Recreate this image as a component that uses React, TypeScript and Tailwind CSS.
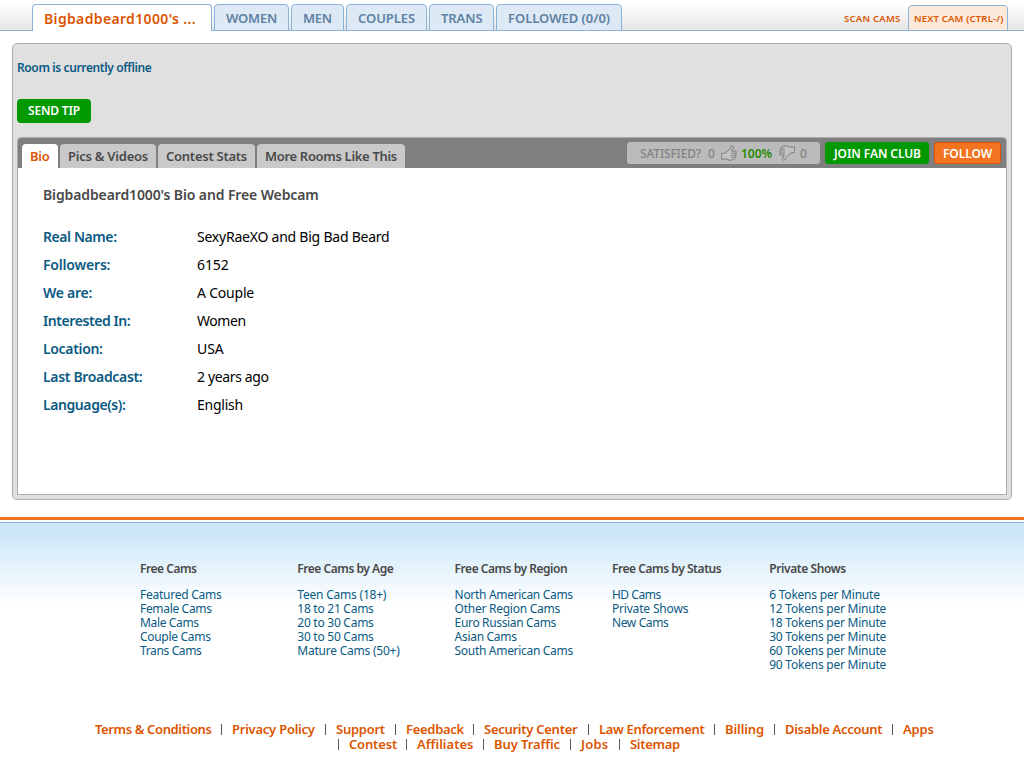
const navTabs = [
  { label: "WOMEN", cls: "w-[75px] tracking-[-0.2px]" },
  { label: "MEN", cls: "w-[53px] tracking-[-0.35px]" },
  { label: "COUPLES", cls: "w-[81px] tracking-[-0.07px]" },
  { label: "TRANS", cls: "w-[65px] tracking-[-0.09px]" },
  { label: "FOLLOWED (0/0)", cls: "w-[126px] tracking-[-0.02px]" },
];

const roomTabs = [
  { label: "Bio", cls: "w-[36px] bg-white text-[#dc5500] tracking-[-0.26px]" },
  { label: "Pics & Videos", cls: "w-[96px] bg-[#c9c9c9] text-[#494949] tracking-[-0.24px]" },
  { label: "Contest Stats", cls: "w-[97px] bg-[#c9c9c9] text-[#494949] tracking-[-0.25px]" },
  { label: "More Rooms Like This", cls: "w-[148px] bg-[#c9c9c9] text-[#494949] tracking-[-0.32px]" },
];

const bio = [
  { k: "Real Name:", kc: "tracking-[-0.42px]", v: "SexyRaeXO and Big Bad Beard", vc: "tracking-[-0.23px]" },
  { k: "Followers:", kc: "tracking-[-0.18px]", v: "6152", vc: "tracking-[-0.1px]" },
  { k: "We are:", kc: "tracking-[-0.28px]", v: "A Couple", vc: "tracking-[-0.21px]" },
  { k: "Interested In:", kc: "tracking-[-0.42px]", v: "Women", vc: "tracking-[-0.42px]" },
  { k: "Location:", kc: "tracking-[-0.33px]", v: "USA", vc: "tracking-[-0.1px]" },
  { k: "Last Broadcast:", kc: "tracking-[-0.33px]", v: "2 years ago", vc: "tracking-[-0.36px]" },
  { k: "Language(s):", kc: "tracking-[-0.42px]", v: "English", vc: "tracking-[-0.23px]" },
];

const columns = [
  {
    title: "Free Cams",
    tc: "tracking-[-0.47px]",
    links: [
      ["Featured Cams", "tracking-[-0.25px]"],
      ["Female Cams", "tracking-[-0.33px]"],
      ["Male Cams", "tracking-[-0.36px]"],
      ["Couple Cams", "tracking-[-0.3px]"],
      ["Trans Cams", "tracking-[-0.36px]"],
    ],
  },
  {
    title: "Free Cams by Age",
    tc: "tracking-[-0.46px]",
    links: [
      ["Teen Cams (18+)", "tracking-[-0.21px]"],
      ["18 to 21 Cams", "tracking-[-0.26px]"],
      ["20 to 30 Cams", "tracking-[-0.26px]"],
      ["30 to 50 Cams", "tracking-[-0.26px]"],
      ["Mature Cams (50+)", "tracking-[-0.23px]"],
    ],
  },
  {
    title: "Free Cams by Region",
    tc: "tracking-[-0.47px]",
    links: [
      ["North American Cams", "tracking-[-0.32px]"],
      ["Other Region Cams", "tracking-[-0.26px]"],
      ["Euro Russian Cams", "tracking-[-0.34px]"],
      ["Asian Cams", "tracking-[-0.3px]"],
      ["South American Cams", "tracking-[-0.31px]"],
    ],
  },
  {
    title: "Free Cams by Status",
    tc: "tracking-[-0.44px]",
    links: [
      ["HD Cams", "tracking-[-0.46px]"],
      ["Private Shows", "tracking-[-0.17px]"],
      ["New Cams", "tracking-[-0.36px]"],
    ],
  },
  {
    title: "Private Shows",
    tc: "tracking-[-0.4px]",
    links: [
      ["6 Tokens per Minute", "tracking-[-0.22px]"],
      ["12 Tokens per Minute", "tracking-[-0.23px]"],
      ["18 Tokens per Minute", "tracking-[-0.23px]"],
      ["30 Tokens per Minute", "tracking-[-0.23px]"],
      ["60 Tokens per Minute", "tracking-[-0.23px]"],
      ["90 Tokens per Minute", "tracking-[-0.23px]"],
    ],
  },
];

const legalTop = [
  ["Privacy Policy", "w-[104px] tracking-[-0.24px]"],
  ["Support", "w-[70px] tracking-[-0.26px]"],
  ["Feedback", "w-[78px] tracking-[-0.3px]"],
  ["Security Center", "w-[115px] tracking-[-0.27px]"],
  ["Law Enforcement", "w-[126px] tracking-[-0.34px]"],
  ["Billing", "w-[60px] tracking-[-0.1px]"],
  ["Disable Account", "w-[118px] tracking-[-0.3px]"],
  ["Apps", "w-[50px] tracking-[-0.2px]"],
];

const legalBottom = [
  ["Contest", "w-[68px] tracking-[-0.17px]"],
  ["Affiliates", "w-[77px] tracking-[0.02px]"],
  ["Buy Traffic", "w-[87px] tracking-[-0.09px]"],
  ["Jobs", "w-[49px] tracking-[0.2px]"],
  ["Sitemap", "w-[70px] tracking-[-0.3px]"],
];

function Thumb({ down = false }: { down?: boolean }) {
  return (
    <svg
      width="16"
      height="16"
      viewBox="0 0 16 16"
      className={down ? "shrink-0 rotate-180" : "shrink-0"}
      fill="none"
      stroke="#7b7b7b"
      strokeWidth="1"
      strokeLinejoin="round"
      strokeLinecap="round"
    >
      <path
        fill="#c2c2c2"
        d="M.6 8.7 4.4 7.9 9.3 3.4 10.3 1C11 .2 12.6.8 12.5 2.3L10.7 6.1H14.6C15.8 6.2 15.8 8 14.7 8.1 15.6 8.5 15.4 10 14.4 10.2 15.1 10.7 14.8 12 13.8 12.2 14.3 13 13.8 14.1 12.7 14.3L9 15.4 5.2 13.9.8 14.1Z"
      />
      <path strokeWidth=".8" d="M10.4 8.1h4.2M10.4 10.2h3.9M10.4 12.2h3.3" />
    </svg>
  );
}

function LegalItem({ label, cls }: { label: string; cls: string }) {
  return (
    <div className={`flex shrink-0 items-center ${cls}`}>
      <span className="mr-[10px] h-[11px] w-px bg-[#5a5a5a]" />
      <a>{label}</a>
    </div>
  );
}

export default function App() {
  return (
    <div className="h-[768px] w-[1024px] overflow-hidden bg-white font-['Noto_Sans',sans-serif] whitespace-nowrap">
      <header className="flex h-[31px] items-end bg-linear-to-b from-white from-15% to-[#e4e4e4] pr-4 pl-8 shadow-[inset_0_-1px_0_#8bb3da]">
        <nav className="flex h-[27px] items-start gap-[2px]">
          <a className="h-[27px] w-[180px] rounded-t-[4px] border border-b-0 border-[#8bb3da] bg-white pl-[11px] text-[14px] leading-[28px] font-semibold tracking-[0.35px] text-[#dc5500]">
            Bigbadbeard1000's ...
          </a>
          {navTabs.map((t) => (
            <a
              key={t.label}
              className={`h-[27px] rounded-t-[4px] border border-[#8bb3da] bg-[#dde9f5] pl-[11px] text-[13px] leading-[27px] font-semibold text-[#5e81a4] ${t.cls}`}
            >
              {t.label}
            </a>
          ))}
        </nav>
        <div className="ml-auto flex text-[9.5px] font-semibold text-[#dc5500]">
          <a className="w-[64px] pt-px leading-[25px] tracking-[0.26px]">SCAN CAMS</a>
          <a className="h-[26px] w-[100px] rounded-t-[4px] border border-[#8bb3da] bg-[#fde9d9] pl-[5px] leading-[26px] tracking-[0.19px]">
            NEXT CAM (CTRL-/)
          </a>
        </div>
      </header>

      <main className="mx-3 mt-3 flex h-[457px] flex-col rounded-[5px] border border-[#acacac] bg-[#e0e0e0] px-1 pb-1">
        <p className="mt-4 h-4 text-[12px] leading-4 font-semibold tracking-[-0.38px] text-[#0a5a83]">
          Room is currently offline
        </p>
        <button className="mt-[23px] h-6 w-[74px] rounded-[4px] bg-[#009900] pl-[11px] text-left text-[12px] leading-6 font-semibold tracking-[-0.17px] text-white">
          SEND TIP
        </button>
        <section className="mt-[14px] flex flex-1 flex-col overflow-hidden rounded-t-[4px] border border-[#acacac] bg-white">
          <div className="flex h-[30px] shrink-0 items-end bg-[#7f7f7f] pl-1">
            <div className="flex items-end gap-[2px]">
              {roomTabs.map((t) => (
                <a
                  key={t.label}
                  className={`h-6 rounded-t-[4px] pl-2 text-[13px] leading-[25px] font-semibold ${t.cls}`}
                >
                  {t.label}
                </a>
              ))}
            </div>
            <div className="mr-[5px] mb-1 ml-auto flex h-[22px] items-stretch gap-[5px] text-[12px] leading-[23px] font-semibold">
              <div className="flex w-[193px] items-center rounded-[3px] bg-[#bbbbbb] pl-[13px] text-[#838383]">
                <span className="w-[67px] pt-px font-medium tracking-[-0.16px]">SATISFIED?</span>
                <span className="w-[14px] pt-px pl-px font-medium">0</span>
                <Thumb />
                <span className="ml-1 w-[38px] pt-px text-[#268b00] tracking-[-0.02px]">100%</span>
                <Thumb down />
                <span className="ml-[4px] pt-px pl-px font-medium">0</span>
              </div>
              <button className="w-[104px] rounded-[3px] bg-[#009900] pt-px pl-[9px] text-left leading-[22px] tracking-[-0.09px] text-white">
                JOIN FAN CLUB
              </button>
              <button className="w-[67px] rounded-[3px] border border-[#dc5500] bg-[#f47321] pt-px pl-2 text-left leading-5 tracking-[-0.09px] text-white">
                FOLLOW
              </button>
            </div>
          </div>
          <div className="px-[25px] pt-[17px] text-[14px]">
            <h1 className="h-[37px] leading-5 font-semibold tracking-[-0.12px] text-[#494949]">
              Bigbadbeard1000's Bio and Free Webcam
            </h1>
            <dl>
              {bio.map((r) => (
                <div key={r.k} className="flex h-7 items-center">
                  <dt className={`w-[154px] font-semibold text-[#0a5a83] ${r.kc}`}>{r.k}</dt>
                  <dd className={`text-black ${r.vc}`}>{r.v}</dd>
                </div>
              ))}
            </dl>
          </div>
        </section>
      </main>

      <footer className="mt-[17px] border-t-[3px] border-[#f47321] pt-[2px]">
        <div className="h-[246px] border-t border-[#8bb3da] bg-[linear-gradient(to_bottom,#cce7f8_0px,#d0e9f9_14px,#ffffff_82px)] pt-[39px]">
          <div className="flex h-[160px] pl-[140px] text-[12px]">
            {columns.map((c) => (
              <div key={c.title} className="w-[157.3px] shrink-0">
                <h2 className={`mb-3 leading-[14px] font-semibold text-[#494949] ${c.tc}`}>{c.title}</h2>
                <ul>
                  {c.links.map(([label, tc]) => (
                    <li key={label} className={`h-[14px] leading-[14px] text-[#0a5a83] ${tc}`}>
                      {label}
                    </li>
                  ))}
                </ul>
              </div>
            ))}
          </div>
          <div className="text-[13px] leading-[15px] font-semibold text-[#dc5500]">
            <div className="flex h-[15px] items-center pl-[95px]">
              <a className="w-[126px] shrink-0 tracking-[-0.37px]">Terms &amp; Conditions</a>
              {legalTop.map(([label, cls]) => (
                <LegalItem key={label} label={label} cls={cls} />
              ))}
            </div>
            <div className="flex h-[15px] items-center pl-[338px]">
              {legalBottom.map(([label, cls]) => (
                <LegalItem key={label} label={label} cls={cls} />
              ))}
            </div>
          </div>
        </div>
      </footer>
    </div>
  );
}
